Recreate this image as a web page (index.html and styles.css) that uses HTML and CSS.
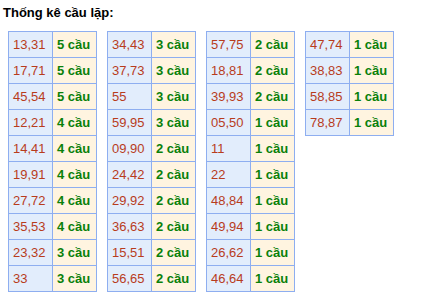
FILE: index.html
```html
<!DOCTYPE html>
<html lang="vi">
<head>
<meta charset="utf-8">
<title>Thống kê cầu lặp</title>
<link rel="stylesheet" href="styles.css">
</head>
<body>
<div class="page">
  <h3 class="title">Thống kê cầu lặp:</h3>
  <div class="tables">
    <div class="block">
      <div class="num">13,31</div><div class="cnt">5 cầu</div>
      <div class="num">17,71</div><div class="cnt">5 cầu</div>
      <div class="num">45,54</div><div class="cnt">5 cầu</div>
      <div class="num">12,21</div><div class="cnt">4 cầu</div>
      <div class="num">14,41</div><div class="cnt">4 cầu</div>
      <div class="num">19,91</div><div class="cnt">4 cầu</div>
      <div class="num">27,72</div><div class="cnt">4 cầu</div>
      <div class="num">35,53</div><div class="cnt">4 cầu</div>
      <div class="num">23,32</div><div class="cnt">3 cầu</div>
      <div class="num">33</div><div class="cnt">3 cầu</div>
    </div>
    <div class="block">
      <div class="num">34,43</div><div class="cnt">3 cầu</div>
      <div class="num">37,73</div><div class="cnt">3 cầu</div>
      <div class="num">55</div><div class="cnt">3 cầu</div>
      <div class="num">59,95</div><div class="cnt">3 cầu</div>
      <div class="num">09,90</div><div class="cnt">2 cầu</div>
      <div class="num">24,42</div><div class="cnt">2 cầu</div>
      <div class="num">29,92</div><div class="cnt">2 cầu</div>
      <div class="num">36,63</div><div class="cnt">2 cầu</div>
      <div class="num">15,51</div><div class="cnt">2 cầu</div>
      <div class="num">56,65</div><div class="cnt">2 cầu</div>
    </div>
    <div class="block">
      <div class="num">57,75</div><div class="cnt">2 cầu</div>
      <div class="num">18,81</div><div class="cnt">2 cầu</div>
      <div class="num">39,93</div><div class="cnt">2 cầu</div>
      <div class="num">05,50</div><div class="cnt">1 cầu</div>
      <div class="num">11</div><div class="cnt">1 cầu</div>
      <div class="num">22</div><div class="cnt">1 cầu</div>
      <div class="num">48,84</div><div class="cnt">1 cầu</div>
      <div class="num">49,94</div><div class="cnt">1 cầu</div>
      <div class="num">26,62</div><div class="cnt">1 cầu</div>
      <div class="num">46,64</div><div class="cnt">1 cầu</div>
    </div>
    <div class="block">
      <div class="num">47,74</div><div class="cnt">1 cầu</div>
      <div class="num">38,83</div><div class="cnt">1 cầu</div>
      <div class="num">58,85</div><div class="cnt">1 cầu</div>
      <div class="num">78,87</div><div class="cnt">1 cầu</div>
    </div>
  </div>
</div>
</body>
</html>
```
FILE: styles.css
```css
html, body {
  margin: 0;
  padding: 0;
  background: #ffffff;
}
body {
  font-family: "Liberation Sans", Arial, sans-serif;
  font-size: 13px;
  line-height: 15px;
}
.page {
  padding: 5px 0 0 3px;
}
.title {
  margin: 0;
  font-size: 13px;
  line-height: 15px;
  font-weight: bold;
  color: #000000;
}
.tables {
  display: flex;
  align-items: flex-start;
  gap: 10px;
  margin: 11px 0 0 5px;
}
.block {
  display: grid;
  grid-template-columns: 43px 43px;
  grid-auto-rows: 25px;
  gap: 1px;
  padding: 1px;
  background: #8eaef0;
}
.num, .cnt {
  display: flex;
  align-items: center;
  padding-left: 4px;
  white-space: nowrap;
}
.num {
  background: #e2edfc;
  color: #b83c1c;
}
.cnt {
  background: #fff4e0;
  color: #0a800a;
  font-weight: bold;
}
```
